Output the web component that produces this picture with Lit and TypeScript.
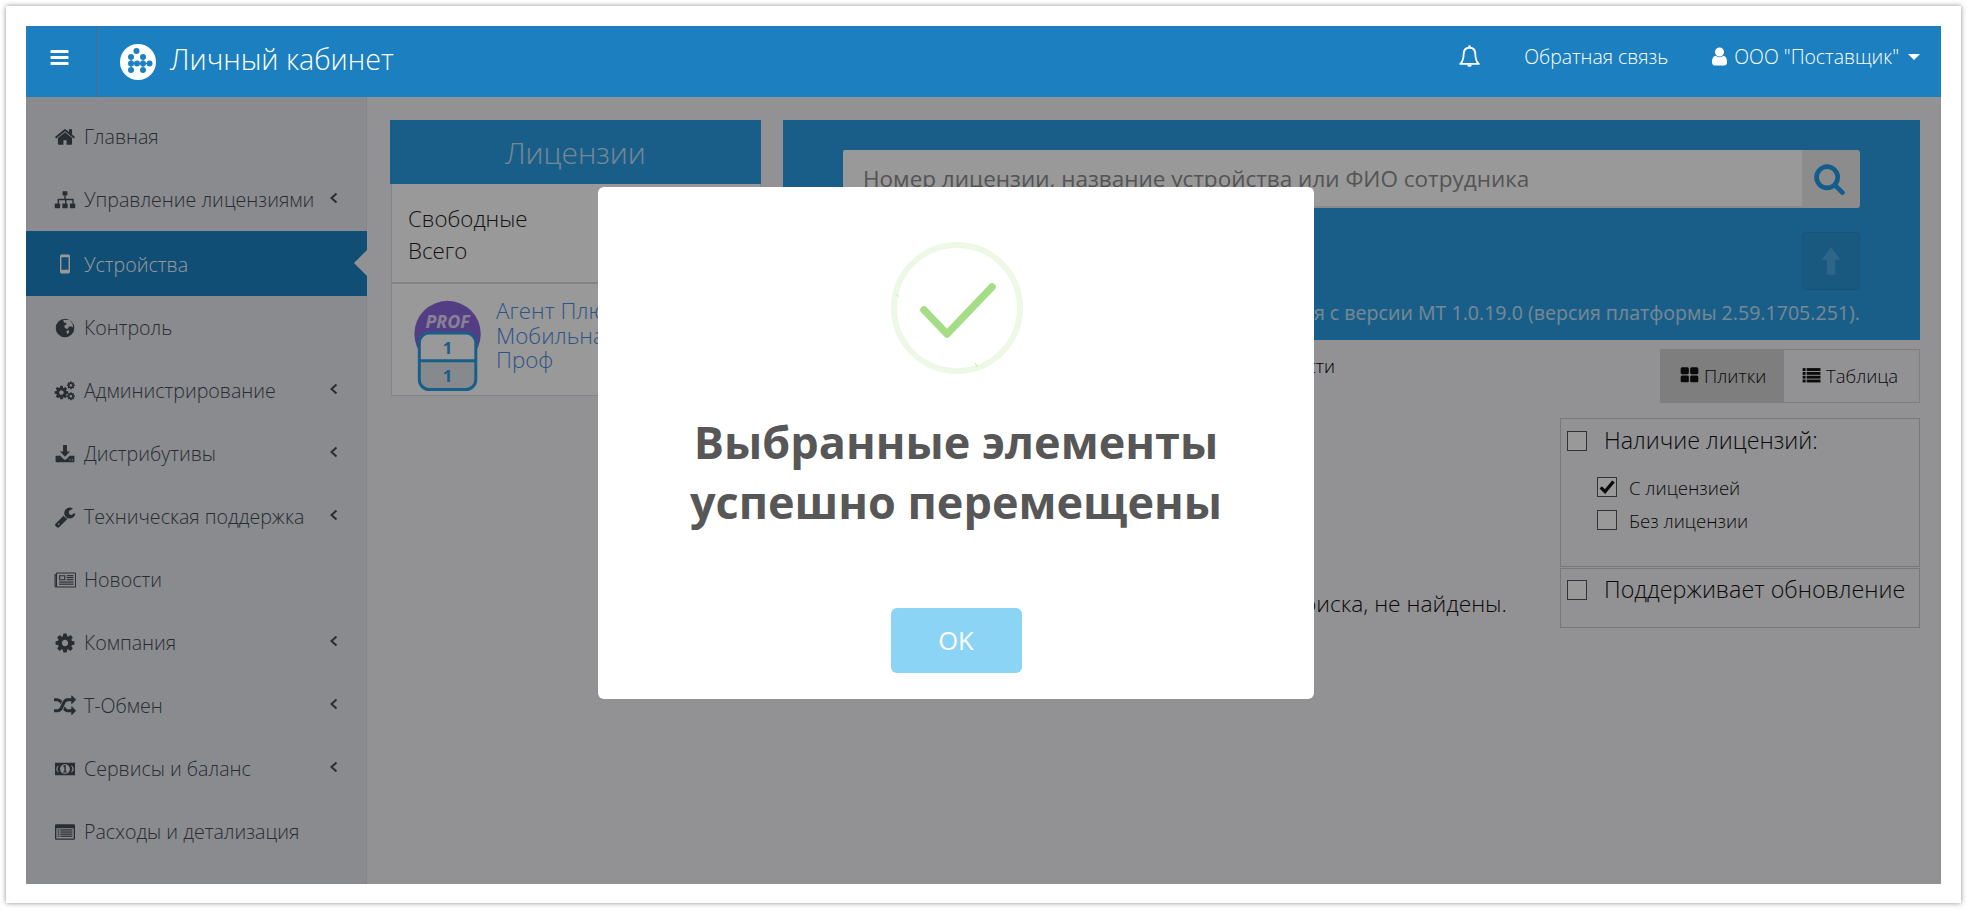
import { LitElement, html, css, svg } from "lit";
import { customElement } from "lit/decorators.js";

const P: Record<string, string> = {
  bars: "M1664 1344v128q0 26-19 45t-45 19h-1408q-26 0-45-19t-19-45v-128q0-26 19-45t45-19h1408q26 0 45 19t19 45zm0-512v128q0 26-19 45t-45 19h-1408q-26 0-45-19t-19-45v-128q0-26 19-45t45-19h1408q26 0 45 19t19 45zm0-512v128q0 26-19 45t-45 19h-1408q-26 0-45-19t-19-45v-128q0-26 19-45t45-19h1408q26 0 45 19t19 45z",
  home: "M1472 992v480q0 26-19 45t-45 19h-384v-384h-256v384h-384q-26 0-45-19t-19-45v-480q0-1 .5-3t.5-3l575-474 575 474q1 2 1 6zm223-69l-62 74q-8 9-21 11h-3q-13 0-21-7l-692-577-692 577q-12 8-24 7-13-2-21-11l-62-74q-8-10-7-23.5t11-21.5l719-599q32-26 76-26t76 26l244 204v-195q0-14 9-23t23-9h192q14 0 23 9t9 23v408l219 182q10 8 11 21.5t-7 23.5z",
  search: "M1216 832q0-185-131.500-316.500t-316.500-131.500-316.500 131.500-131.500 316.500 131.500 316.500 316.500 131.500 316.500-131.500 131.500-316.500zm512 832q0 52-38 90t-90 38q-54 0-90-38l-343-342q-179 124-399 124-143 0-273.500-55.500t-225-150-150-225-55.500-273.500 55.500-273.500 150-225 225-150 273.500-55.500 273.500 55.500 225 150 150 225 55.500 273.500q0 220-124 399l343 343q37 37 37 90z",
  user: "M1536 1399q0 109-62.500 187t-150.500 78h-854q-88 0-150.500-78t-62.500-187q0-85 8.500-160.500t31.500-152 58.500-131 94-89 134.500-34.500q131 128 313 128t313-128q76 0 134.500 34.500t94 89 58.500 131 31.500 152 8.500 160.500zm-256-887q0 159-112.500 271.500t-271.500 112.500-271.500-112.500-112.500-271.500 112.500-271.500 271.500-112.500 271.500 112.500 112.500 271.500z",
  cog: "M1152 896q0-106-75-181t-181-75-181 75-75 181 75 181 181 75 181-75 75-181zm512-109v222q0 12-8 23t-20 13l-185 28q-19 54-39 91 35 50 107 138 10 12 10 25t-9 23q-27 37-99 108t-94 71q-12 0-26-9l-138-108q-44 23-91 38-16 136-29 186-7 28-36 28h-222q-14 0-24.500-8.500t-11.500-21.500l-28-184q-49-16-90-37l-141 107q-10 9-25 9-14 0-25-11-126-114-165-168-7-10-7-23 0-12 8-23 15-21 51-66.500t54-70.500q-27-50-41-99l-183-27q-13-2-21-12.500t-8-23.500v-222q0-12 8-23t19-13l186-28q14-46 39-92-40-57-107-138-10-12-10-24 0-10 9-23 26-36 98.500-107.500t94.500-71.500q13 0 26 10l138 107q44-23 91-38 16-136 29-186 7-28 36-28h222q14 0 24.500 8.500t11.500 21.500l28 184q49 16 90 37l142-107q9-9 24-9 13 0 25 10 129 119 165 170 7 8 7 22 0 12-8 23-15 21-51 66.500t-54 70.500q26 50 41 98l183 28q13 2 21 12.500t8 23.500z",
  th: "M832 1024v384q0 52-38 90t-90 38h-512q-52 0-90-38t-38-90v-384q0-52 38-90t90-38h512q52 0 90 38t38 90zm0-768v384q0 52-38 90t-90 38h-512q-52 0-90-38t-38-90v-384q0-52 38-90t90-38h512q52 0 90 38t38 90zm896 768v384q0 52-38 90t-90 38h-512q-52 0-90-38t-38-90v-384q0-52 38-90t90-38h512q52 0 90 38t38 90zm0-768v384q0 52-38 90t-90 38h-512q-52 0-90-38t-38-90v-384q0-52 38-90t90-38h512q52 0 90 38t38 90z",
  wrench: "M448 1472q0-26-19-45t-45-19-45 19-19 45 19 45 45 19 45-19 19-45zm644-420l-682 682q-37 37-90 37-52 0-91-37l-106-108q-38-36-38-90 0-53 38-91l681-681q39 98 114.500 173.500t173.500 114.500zm634-435q0 39-23 106-47 134-164.500 217.500t-258.500 83.500q-185 0-316.500-131.500t-131.500-316.500 131.500-316.500 316.500-131.500q58 0 121.500 16.500t107.500 46.500q16 11 16 28t-16 28l-293 169v224l193 107q5-3 79-48.500t135.500-81 70.500-35.500q15 0 23.500 10t8.500 25z",
  random: "M666 481q-60 92-137 273-22-45-37-72.500t-40.500-63.500-51-56.500-63-35-81.500-14.500h-224q-14 0-23-9t-9-23v-192q0-14 9-23t23-9h224q250 0 410 225zm1126 799q0 14-9 23l-320 320q-9 9-23 9-13 0-22.500-9.500t-9.500-22.500v-192q-32 0-85 .5t-81 1-73-1-71-5-64-10.500-63-18.500-58-28.500-59-40-55-53.500-56-69.500q59-93 136-273 22 45 37 72.500t40.500 63.500 51 56.500 63 35 81.500 14.500h256v-192q0-14 9-23t23-9q12 0 24 10l319 319q9 9 9 23zm0-896q0 14-9 23l-320 320q-9 9-23 9-13 0-22.500-9.500t-9.500-22.500v-192h-256q-48 0-87 15t-69 45-51 61.500-45 77.500q-32 62-78 171-29 66-49.500 111t-54 105-64 100-74 83-90 68.500-106.500 42-128 16.500h-224q-14 0-23-9t-9-23v-192q0-14 9-23t23-9h224q48 0 87-15t69-45 51-61.500 45-77.500q32-62 78-171 29-66 49.500-111t54-105 64-100 74-83 90-68.500 106.500-42 128-16.500h256v-192q0-14 9-23t23-9q12 0 24 10l319 319q9 9 9 23z",
};

const fa = (k: string) => svg`<path fill="currentColor" d=${P[k]}/>`;
const icons: Record<string, unknown> = {
  bars: fa("bars"), home: fa("home"), search: fa("search"), user: fa("user"), cog: fa("cog"),
  th: fa("th"), wrench: fa("wrench"), random: fa("random"),
  arrow: svg`<path fill="currentColor" d="M896 60l560 760h-310v900h-500v-900h-310z"/>`,
  sitemap: svg`<g fill="currentColor"><rect x="700" y="180" width="392" height="340" rx="50"/><rect x="60" y="1180" width="440" height="380" rx="50"/><rect x="676" y="1180" width="440" height="380" rx="50"/><rect x="1292" y="1180" width="440" height="380" rx="50"/><path d="M840 500h112v300h652v400h-112v-290h-484v290h-112v-290h-484v290h-112v-400h540z"/></g>`,
  mobile: svg`<g fill="currentColor"><path fill-rule="evenodd" d="M620 130h552a130 130 0 0 1 130 130v1272a130 130 0 0 1-130 130h-552a130 130 0 0 1-130-130v-1272a130 130 0 0 1 130-130zm-15 210v1020h582v-1020z"/></g>`,
  globe: svg`<path fill="currentColor" fill-rule="evenodd" d="M896 140a756 756 0 1 0 0 1512a756 756 0 0 0 0-1512zM760 220L1250 250 1500 500 1560 850 1380 760 1200 800 1100 1000 900 900 820 740 1000 620 1020 480 800 440ZM1000 1130L1240 1100 1220 1280 1080 1400Z"/>`,
  cogs: svg`<g fill="currentColor"><g transform="translate(-40 380) scale(.72)"><path d=${P.cog}/></g><g transform="translate(1000 60) scale(.42)"><path d=${P.cog}/></g><g transform="translate(1000 950) scale(.42)"><path d=${P.cog}/></g></g>`,
  download: svg`<g fill="currentColor"><path d="M740 170h312v520h250l-406 420-406-420h250z"/><path fill-rule="evenodd" d="M130 1040h380l260 270q126 110 252 0l260-270h380v450q0 70-70 70h-1392q-70 0-70-70zm1180 290a50 50 0 1 0 0 100a50 50 0 0 0 0-100zm190 0a50 50 0 1 0 0 100a50 50 0 0 0 0-100z"/></g>`,
  news: svg`<g fill="none" stroke="currentColor"><rect x="200" y="320" width="1560" height="1150" rx="70" stroke-width="90"/><path d="M200 480H90v900q0 90 110 90" stroke-width="90"/></g><g fill="currentColor"><path fill-rule="evenodd" d="M420 500h500v420h-500zm90 90v240h320v-240z"/><rect x="1030" y="500" width="560" height="90"/><rect x="1030" y="660" width="560" height="90"/><rect x="1030" y="830" width="560" height="90"/><rect x="420" y="1020" width="1170" height="90"/><rect x="420" y="1190" width="1170" height="90"/></g>`,
  money: svg`<g fill="currentColor"><path fill-rule="evenodd" d="M80 380h1632v1030h-1632zm816 120c-240 0-400 180-400 395s160 395 400 395 400-180 400-395-160-395-400-395zm-600 130q-20 120-100 140v250q80 20 100 140h100c-60-70-110-170-110-265s50-195 110-265zm1090 0c60 70 110 170 110 265s-50 195-110 265h110q20-120 100-140v-250q-80-20-100-140z"/><path d="M760 640l130-70h70v530h90v90h-300v-90h90v-380l-70 40z"/></g>`,
  listalt: svg`<g fill="currentColor"><path fill-rule="evenodd" d="M190 260h1412q110 0 110 110v1052q0 110-110 110h-1412q-110 0-110-110v-1052q0-110 110-110zm0 330v830h1412v-830z"/><rect x="290" y="680" width="150" height="100"/><rect x="520" y="680" width="980" height="100"/><rect x="290" y="850" width="150" height="100"/><rect x="520" y="850" width="980" height="100"/><rect x="290" y="1020" width="150" height="100"/><rect x="520" y="1020" width="980" height="100"/><rect x="290" y="1190" width="150" height="100"/><rect x="520" y="1190" width="980" height="100"/></g>`,
  bell: svg`<g fill="none" stroke="currentColor" stroke-width="130" stroke-linejoin="round"><path d="M896 270c-290 0-420 210-420 470 0 330-60 520-250 690h1340c-190-170-250-360-250-690 0-260-130-470-420-470z"/></g><g fill="currentColor"><circle cx="896" cy="190" r="95"/><path d="M740 1480h312a156 156 0 0 1-312 0z"/></g>`,
  list: svg`<g fill="currentColor">${[200, 560, 920, 1280].map((y) => svg`<rect x="60" y=${y} width="280" height="270"/><rect x="440" y=${y} width="1300" height="270"/>`)}</g>`,
  check: svg`<path fill="none" stroke="currentColor" stroke-width="330" d="M270 930l430 430 840-1010"/>`,
};

const icon = (n: string) => html`<svg class="ic" viewBox="0 0 1792 1792" aria-hidden="true">${icons[n]}</svg>`;

const MENU: [string, string, boolean][] = [
  ["home", "Главная", false],
  ["sitemap", "Управление лицензиями", true],
  ["mobile", "Устройства", false],
  ["globe", "Контроль", false],
  ["cogs", "Администрирование", true],
  ["download", "Дистрибутивы", true],
  ["wrench", "Техническая поддержка", true],
  ["news", "Новости", false],
  ["cog", "Компания", true],
  ["random", "Т-Обмен", true],
  ["money", "Сервисы и баланс", true],
  ["listalt", "Расходы и детализация", false],
];

@customElement("app-root")
export class AppRoot extends LitElement {
  static styles = css`
    :host { display: block; height: 910px; background: #fff; font-family: "Open Sans", sans-serif; overflow: hidden; }
    * { box-sizing: border-box; }
    .ic { width: 1em; height: 1em; display: block; flex: none; }
    .frame { margin: 6px 6px 0 6px; height: 897px; width: 1955px; padding: 20px; background: #fff;
      box-shadow: 0 0 5px rgba(0,0,0,.45); }
    .app { position: relative; height: 858px; width: 1915px; display: flex; flex-direction: column; overflow: hidden; }
    .top { height: 71px; flex: none; background: #1c80c0; color: #fff; display: flex; align-items: center; position: relative; z-index: 3; }
    .burger { width: 71px; height: 71px; border-right: 1px solid #56677a; display: flex; align-items: center; justify-content: center; font-size: 21px; padding-right: 4px; padding-bottom: 8px; }
    .logo { width: 36px; height: 36px; margin-left: 23px; flex: none; }
    .brand { margin-left: 14px; font-size: 28.6px; font-weight: 300; padding-bottom: 6px; }
    .tr { margin-left: auto; display: flex; align-items: center; font-size: 19.4px; font-weight: 300; padding-right: 21px; padding-bottom: 11px; }
    .tr .bell { font-size: 25px; margin-right: 42px; }
    .tr .fb { margin-right: 41px; }
    .tr .acc { display: flex; align-items: center; gap: 4px; }
    .tr .acc .ic { font-size: 21px; }
    .caret { width: 0; height: 0; border: 6px solid transparent; border-top-color: #fff; border-bottom: 0; margin-left: 5px; margin-top: 2px; }

    .body { flex: 1; display: flex; background: #f3f3f7; min-height: 0; }
    .side { width: 341px; flex: none; background: #e6e8ed; padding-top: 8px; border-right: 1px solid #e0e0e4; }
    .mi { height: 63px; display: flex; align-items: center; padding-left: 28px; color: #444a56; font-size: 19.6px; font-weight: 300; position: relative; white-space: nowrap; }
    .mi .w { width: 30px; flex: none; display: flex; justify-content: flex-start; font-size: 22px; margin-right: 0; }
    .mi.on { background: #1c83c5; color: #fff; height: 65px; margin-right: -1px; }
    .mi.on span:last-child { position: relative; top: 1px; }
    .mi.on::after { content: ""; position: absolute; right: 0; top: 19px; border: 13px solid transparent; border-right-color: #f3f3f7; border-left: 0; }
    .chev { position: absolute; left: 301px; top: 50%; margin-top: -9px; width: 14px; height: 14px; }

    .main { flex: 1; padding: 23px 21px 0 23px; display: flex; align-items: flex-start; gap: 22px; min-width: 0; }
    .lic { width: 371px; flex: none; }
    .lic .h { height: 64px; background: #2b9de3; color: #fff; font-size: 30px; font-weight: 300; display: flex; align-items: center; justify-content: center; }
    .lic .h span { color: #fff; opacity: .72; }
    .lic .row { background: #fff; border: 1px solid #ddd; border-top: 0; border-bottom-width: 2px; height: 100px; padding: 19px 16px; font-size: 22.3px; font-weight: 300; line-height: 32px; color: #222; margin-left: 1px; }
    .card { background: #fff; margin-left: 1px; border: 1px solid #ddd; border-top: 0; height: 112px; display: flex; position: relative; }
    .badge { width: 82px; height: 100%; flex: none; margin-left: 21px; }
    .card .t { font-size: 22.3px; font-weight: 300; line-height: 24.500px; color: #4d8ce0; padding-top: 15px; margin-left: 1px; white-space: nowrap; }

    .right { flex: 1; min-width: 0; display: flex; flex-direction: column; }
    .panel { height: 220px; background: #2b9de3; padding: 30px 60px 0 60px; }
    .sr { display: flex; height: 58px; }
    .inp { flex: 1; background: #fff; border-radius: 2px 0 0 2px; font-size: 22.5px; font-weight: 400; color: #8d8d8d; display: flex; align-items: center; padding-left: 20px; white-space: nowrap; border-bottom: 2px solid #e6e6e6; overflow: hidden; }
    .sb { width: 58px; background: #e9e9e9; color: #1f9be8; border-radius: 0 3px 3px 0; display: flex; align-items: center; justify-content: center; font-size: 33px; padding-right: 3px; padding-bottom: 2px; }
    .up { margin: 24px 0 0 auto; width: 58px; height: 58px; background: #2a93d4; border: 1px solid #2a8bc9; border-radius: 3px; color: #4dabe6; display: flex; align-items: center; justify-content: center; font-size: 30px; }
    .note { text-align: right; color: #fff; opacity: .72; font-size: 19.6px; font-weight: 400; margin-top: 9px; white-space: nowrap; display: flex; justify-content: flex-end; }

    .toolbar { display: flex; justify-content: flex-end; margin-top: 9px; position: relative; }
    .hint { position: absolute; right: 585px; top: 4px; font-size: 18.3px; font-weight: 300; color: #000; white-space: nowrap; }
    .tg { display: flex; height: 54px; border: 1px solid #d2d2d2; font-size: 18.5px; font-weight: 300; color: #111; }
    .tg div { display: flex; align-items: center; gap: 5px; padding: 0 18px 2px; }
    .tg .a { background: #d2d2d2; width: 123px; padding-left: 19px; color: #111; }
    .tg .b { width: 135px; padding-left: 18px; background: #f3f3f7; }
    .tg .ic { font-size: 19px; }
    .lower { display: flex; margin-top: 15px; justify-content: flex-end; position: relative; }
    .empty { position: absolute; right: 413px; top: 170px; font-size: 22.8px; font-weight: 300; color: #111; white-space: nowrap; }
    .filters { width: 360px; }
    .fb1 { border: 1px solid #c8c8c8; height: 149px; padding: 11px 6px; }
    .fb2 { border: 1px solid #c8c8c8; height: 60px; margin-top: 1px; padding: 10px 6px; }
    .fh { display: flex; align-items: center; gap: 17px; height: 21px; font-size: 23.3px; font-weight: 300; color: #111; white-space: nowrap; }
    .fh span:last-child { position: relative; top: -1px; }
    .cb { width: 20px; height: 20px; flex: none; border: 1px solid #555; background: #fff; color: #111; display: flex; align-items: center; justify-content: center; font-size: 18px; }
    .subs { padding: 26px 0 0 30px; display: flex; flex-direction: column; gap: 13px; }
    .sub { display: flex; align-items: center; gap: 12px; height: 20px; font-size: 18.6px; font-weight: 300; color: #111; white-space: nowrap; }

    .overlay { position: absolute; left: 0; right: 0; top: 71px; bottom: 0; background: rgba(0,0,0,.4); z-index: 2; }
    .modal { position: absolute; left: 572px; top: 161px; width: 716px; height: 512px; background: #fff; border-radius: 6px; z-index: 4; display: flex; flex-direction: column; align-items: center; }
    .ring { width: 132px; height: 132px; margin-top: 55px; margin-left: 1px; flex: none; }
    .title { margin-top: 38px; font-size: 45px; line-height: 60px; font-weight: 700; color: #575757; text-align: center; white-space: nowrap; }
    .ok { margin-top: 76px; width: 131px; height: 65px; background: #8cd4f5; color: #fff; border-radius: 6px; display: flex; align-items: center; justify-content: center; font-size: 25.5px; font-weight: 400; padding-bottom: 2px; }
  `;

  render() {
    const chev = html`<svg class="chev" viewBox="0 0 14 14"><path d="M9.500 2.500L4.500 7l5 4.500" fill="none" stroke="currentColor" stroke-width="2"/></svg>`;
    return html`
      <div class="frame"><div class="app">
        <header class="top">
          <div class="burger">${icon("bars")}</div>
          <svg class="logo" viewBox="0 0 36 36">
            <circle cx="18" cy="18" r="18" fill="#fff"/>
            <g fill="#1c80c0">
              ${[[16.5, 7], [11, 13], [23, 13], [11, 19.500], [17, 19.500], [23, 19.500], [29.500, 19.500], [11, 26], [23, 26]].map(
                ([x, y]) => svg`<circle cx=${x} cy=${y} r="3"/>`,
              )}
              <path d="M11 19h19v1h-19zM22.500 13h1v13h-1zM10.500 13h1v13h-1z"/>
            </g>
          </svg>
          <div class="brand">Личный кабинет</div>
          <div class="tr">
            <div class="bell">${icon("bell")}</div>
            <div class="fb">Обратная связь</div>
            <div class="acc">${icon("user")}<span>ООО "Поставщик"</span><i class="caret"></i></div>
          </div>
        </header>
        <div class="body">
          <nav class="side">
            ${MENU.map(
              ([ic, t, ch], i) => html`<div class="mi ${i === 2 ? "on" : ""}"><span class="w">${icon(ic)}</span><span>${t}</span>${ch ? chev : ""}</div>`,
            )}
          </nav>
          <main class="main">
            <section class="lic">
              <div class="h"><span>Лицензии</span></div>
              <div class="row">Свободные<br />Всего</div>
              <div class="card">
                <svg class="badge" viewBox="0 0 82 112">
                  <circle cx="34.500" cy="50.500" r="33.500" fill="#8a67dd"/>
                  <text x="34.500" y="44" text-anchor="middle" font-family="Open Sans" font-weight="700" font-style="italic" font-size="18" fill="#fff" opacity=".75">PROF</text>
                  <rect x="6" y="49.500" width="57" height="57" rx="10" fill="#fff"/>
                  <path d="M6 78h57v18.500a10 10 0 0 1-10 10h-37a10 10 0 0 1-10-10z" fill="#dfe7ec"/>
                  <rect x="6" y="49.500" width="57" height="57" rx="10" fill="none" stroke="#2b9de3" stroke-width="3"/>
                  <path d="M6 77.500h57" stroke="#2b9de3" stroke-width="3"/>
                  <text x="34.500" y="71" text-anchor="middle" font-family="Open Sans" font-weight="700" font-size="17" fill="#2b9de3">1</text>
                  <text x="34.500" y="99" text-anchor="middle" font-family="Open Sans" font-weight="700" font-size="17" fill="#2b9de3">1</text>
                </svg>
                <div class="t">Агент Плюс:<br />Мобильная торговля<br />Проф</div>
              </div>
            </section>
            <section class="right">
              <div class="panel">
                <div class="sr">
                  <div class="inp">Номер лицензии, название устройства или ФИО сотрудника</div>
                  <div class="sb">${icon("search")}</div>
                </div>
                <div class="up">${icon("arrow")}</div>
                <div class="note">Обновление поддерживается с версии МТ 1.0.19.0 (версия платформы 2.59.1705.251).</div>
              </div>
              <div class="toolbar">
                <div class="hint">Показать неактивности</div>
                <div class="tg">
                  <div class="a">${icon("th")}<span>Плитки</span></div>
                  <div class="b">${icon("list")}<span>Таблица</span></div>
                </div>
              </div>
              <div class="lower">
                <div class="empty">Устройства, соответствующие условиям поиска, не найдены.</div>
                <div class="filters">
                  <div class="fb1">
                    <div class="fh"><span class="cb"></span><span>Наличие лицензий:</span></div>
                    <div class="subs">
                      <div class="sub"><span class="cb">${icon("check")}</span><span>С лицензией</span></div>
                      <div class="sub"><span class="cb"></span><span>Без лицензии</span></div>
                    </div>
                  </div>
                  <div class="fb2">
                    <div class="fh"><span class="cb"></span><span>Поддерживает обновление</span></div>
                  </div>
                </div>
              </div>
            </section>
          </main>
        </div>
        <div class="overlay"></div>
        <div class="modal">
          <svg class="ring" viewBox="0 0 132 132">
            <circle cx="66" cy="66" r="63" fill="none" stroke="#edf8e7" stroke-width="6"/>
            <path d="M4.500 52l3.500 2.500M84 121l2.500 4" stroke="#c9e9b8" stroke-width="1"/>
            <path d="M33 68L56 92 101 45" fill="none" stroke="#a5dc86" stroke-width="7.500" stroke-linecap="round" stroke-linejoin="round"/>
          </svg>
          <div class="title">Выбранные элементы<br />успешно перемещены</div>
          <div class="ok">OK</div>
        </div>
      </div></div>
    `;
  }
}
